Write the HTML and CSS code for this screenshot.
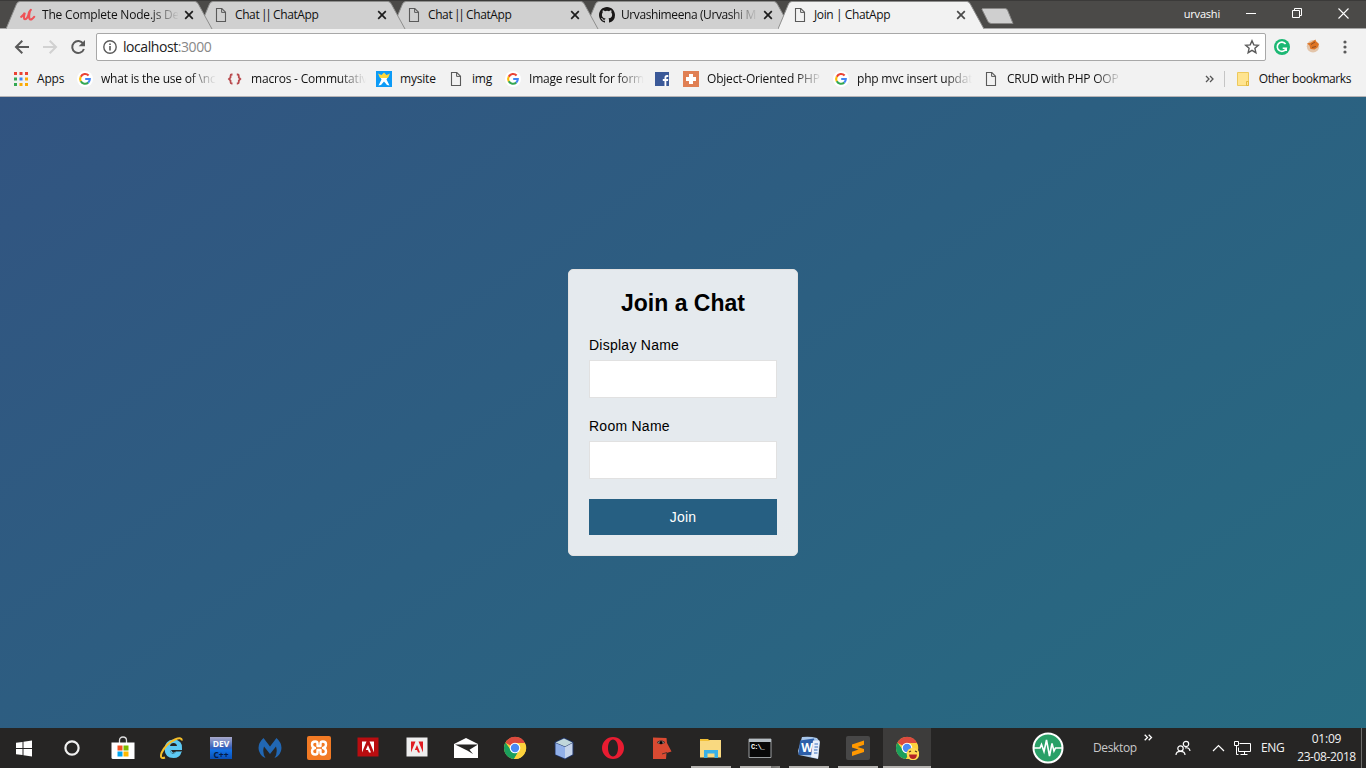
FILE: index.html
```html
<!DOCTYPE html>
<html lang="en">
<head>
<meta charset="utf-8">
<title>Join | ChatApp</title>
<link rel="stylesheet" href="styles.css">
</head>
<body>
<svg class="defs" width="0" height="0">
  <symbol id="doc" viewBox="0 0 16 16"><path d="M3.5 1.5h5.3l3.7 3.7v9.3h-9z" fill="none" stroke="#5a5a5a" stroke-width="1.1"/><path d="M8.6 1.7v3.7h3.8" fill="none" stroke="#5a5a5a"/></symbol>
  <symbol id="google" viewBox="0 0 16 16"><circle cx="8" cy="8" r="8" fill="#fff"/><g fill="none" stroke-width="2.1"><path d="M11.6 4.5A4.8 4.8 0 0 0 3.8 5.7" stroke="#ea4335"/><path d="M3.8 5.6a4.8 4.8 0 0 0 0 4.8" stroke="#fbbc05"/><path d="M3.8 10.3a4.8 4.8 0 0 0 7.4 1.3" stroke="#34a853"/><path d="M8.2 8h4.6a4.8 4.8 0 0 1-1.6 3.6" stroke="#4285f4"/></g></symbol>
  <symbol id="close" viewBox="0 0 10 10"><path d="M1.2 1.2l7.6 7.6M8.8 1.2L1.2 8.8" fill="none" stroke="currentColor" stroke-width="1.7"/></symbol>
  <symbol id="tabshape" viewBox="0 0 207 28"><path d="M0 28L10.5 3Q11.500 0.500 14 .5H189Q191 .5 192.300 3L206 28z" fill="currentColor"/><path d="M0 28L10.500 3Q11.500 .5 14 .5H189Q191 .5 192.300 3L206 28" fill="none" stroke="#8e8e8d"/></symbol>
  <symbol id="chrome" viewBox="0 0 24 24"><circle cx="12" cy="12" r="11" fill="#fdd23c"/><path d="M12 12L2.300 6.800A11 11 0 0 1 22 7z" fill="#db4a3e"/><path d="M2.400 6.600A11 11 0 0 0 11 23l5-8.500-7.500.300z" fill="#1b9f5c"/><path d="M12 7h9.900A11 11 0 0 1 11 23l5.300-8.600z" fill="#fdd23c"/><circle cx="12" cy="12" r="5.300" fill="#fff"/><circle cx="12" cy="12" r="4.200" fill="#4a8af4"/></symbol>
</svg>

<header class="tabstrip">
  <div class="tab t1"><svg class="shape"><use href="#tabshape"/></svg>
    <svg class="favicon" viewBox="0 0 16 16"><path d="M1.200 9.800Q3.500 8.500 4.800 5.800Q3 12.300 5 12.300Q7.800 12 9 5.500M10 3.800Q8.800 8.500 9.300 11Q9.800 13.300 12 12Q13.500 11 14.200 9.800M9.200 5.200L10.800 2.800" fill="none" stroke="#ef5257" stroke-width="2.100" stroke-linecap="round"/></svg>
    <span class="label">The Complete Node.js De</span><svg class="close"><use href="#close"/></svg></div>
  <div class="tab t2"><svg class="shape"><use href="#tabshape"/></svg><svg class="favicon"><use href="#doc"/></svg><span class="label plain">Chat <b class="bars">||</b> ChatApp</span><svg class="close"><use href="#close"/></svg></div>
  <div class="tab t3"><svg class="shape"><use href="#tabshape"/></svg><svg class="favicon"><use href="#doc"/></svg><span class="label plain">Chat <b class="bars">||</b> ChatApp</span><svg class="close"><use href="#close"/></svg></div>
  <div class="tab t4"><svg class="shape"><use href="#tabshape"/></svg>
    <svg class="favicon" viewBox="0 0 16 16"><path fill="#191717" d="M8 0C3.580 0 0 3.580 0 8c0 3.540 2.290 6.530 5.470 7.590.4.070.55-.17.55-.38 0-.19-.01-.82-.01-1.490-2.010.37-2.530-.49-2.690-.94-.09-.23-.48-.94-.82-1.130-.28-.15-.68-.52-.01-.53.63-.01 1.080.58 1.230.82.72 1.210 1.870.87 2.330.66.07-.52.28-.87.51-1.070-1.780-.2-3.640-.89-3.640-3.950 0-.87.31-1.590.82-2.150-.08-.2-.36-1.020.08-2.120 0 0 .67-.21 2.200.82a7.600 7.600 0 0 1 4 0c1.530-1.040 2.200-.82 2.200-.82.44 1.100.16 1.920.08 2.120.51.56.82 1.270.82 2.150 0 3.070-1.870 3.750-3.650 3.950.29.25.54.73.54 1.480 0 1.070-.01 1.930-.01 2.200 0 .21.15.46.55.38A8 8 0 0 0 16 8c0-4.420-3.580-8-8-8z"/></svg>
    <span class="label tight">Urvashimeena (Urvashi M</span><svg class="close"><use href="#close"/></svg></div>
  <div class="tab active"><svg class="shape"><use href="#tabshape"/></svg><svg class="favicon"><use href="#doc"/></svg><span class="label plain">Join | ChatApp</span><svg class="close"><use href="#close"/></svg></div>
  <svg class="newtab" width="34" height="16"><path d="M1.500.5H24Q26 .5 26.700 2.500L32 15.500H10.500Q8 15.500 7 13.500L1 1.500z" fill="#cfcfcf" stroke="#898887"/></svg>
  <div class="window-controls">
    <span class="profile">urvashi</span>
    <svg width="11" height="11"><path d="M0 5.500h10" stroke="#fff"/></svg>
    <svg width="11" height="11"><path d="M.5 2.500h7v7h-7zM2.500 2.500v-2h7v7h-2" fill="none" stroke="#fff"/></svg>
    <svg width="11" height="11"><path d="M.5.5l10 10M10.500.5l-10 10" stroke="#fff" stroke-width="1.100"/></svg>
  </div>
</header>

<div class="toolbar">
  <svg class="nav" viewBox="0 0 16 16"><path d="M15 8H2.500M8.300 1.800L2 8l6.300 6.200" fill="none" stroke="#5a5a5a" stroke-width="2"/></svg>
  <svg class="nav" viewBox="0 0 16 16"><path d="M1 8h12.500M7.700 1.800L14 8l-6.300 6.200" fill="none" stroke="#d1d1d1" stroke-width="2"/></svg>
  <svg class="nav" viewBox="0 0 16 16"><path d="M13.200 4.600A6 6 0 1 0 13.900 10" fill="none" stroke="#5a5a5a" stroke-width="2"/><path d="M15 1v6.300H8.700z" fill="#5a5a5a"/></svg>
  <div class="omnibox">
    <svg class="info" viewBox="0 0 14 14"><circle cx="7" cy="7" r="6.200" fill="none" stroke="#5a5a5a" stroke-width="1.400"/><path d="M7 6v4.500M7 3.400v1.500" stroke="#5a5a5a" stroke-width="1.600"/></svg>
    <span class="url">localhost<i>:3000</i></span>
    <svg class="star" viewBox="0 0 16 16"><path d="M8 1.800l1.800 4.100 4.500.4-3.400 3 1 4.400L8 11.400l-3.900 2.300 1-4.400-3.400-3 4.500-.4z" fill="none" stroke="#5a5a5a" stroke-width="1.400"/></svg>
  </div>
  <svg class="ext" viewBox="0 0 16 16"><circle cx="8" cy="8" r="8" fill="#1cb874"/><path d="M11.600 5A4.600 4.600 0 1 0 12.200 9.300H8.700M12.200 9v3" fill="none" stroke="#fff" stroke-width="1.600"/></svg>
  <svg class="ext fox" viewBox="0 0 16 16"><circle cx="8" cy="8.300" r="6.200" fill="#e3c5aa"/><path d="M2 5.500L6 4.500l4.500-3 .5 2L14 6l-1.500 3.500-3 2L5.500 11 4.500 7.500z" fill="#de7424"/><path d="M6 6.500l4-2.500M7 9.500l4-1" stroke="#8f4e24"/></svg>
  <svg class="menu" width="4" height="14"><g fill="#5a5a5a"><circle cx="2" cy="2" r="1.600"/><circle cx="2" cy="7" r="1.600"/><circle cx="2" cy="12" r="1.600"/></g></svg>
</div>

<nav class="bookmarks">
  <a class="bm w64"><svg viewBox="0 0 16 16"><g fill="#ea4335"><path d="M1 1h3v3H1zM6.500 1h3v3h-3zM12 1h3v3h-3z"/></g><path d="M1 6.500h3v3H1z" fill="#34a853"/><path d="M6.500 6.500h3v3h-3z" fill="#4285f4"/><path d="M12 6.500h3v3h-3z" fill="#fbab05"/><path d="M1 12h3v3H1z" fill="#34a853"/><path d="M6.500 12h3v3h-3zM12 12h3v3h-3z" fill="#fbab05"/></svg><span>Apps</span></a>
  <a class="bm w150 near"><svg><use href="#google"/></svg><span class="fade">what is the use of \nc</span></a>
  <a class="bm w149 near"><svg viewBox="0 0 16 16"><path d="M5.500 3.500H4.700Q3.500 3.500 3.500 5v1.500L2 8l1.500 1.500V11q0 1.500 1.200 1.500h.8M9.800 3.500h.8q1.200 0 1.200 1.500v1.500L13.300 8l-1.500 1.500V11q0 1.500-1.200 1.500h-.8" fill="none" stroke="#b94a4e" stroke-width="1.800"/></svg><span class="fade">macros - Commutativ</span></a>
  <a class="bm w71"><svg viewBox="0 0 16 16"><path d="M0 0h16v16H0z" fill="#0c9bf7"/><path d="M2.500 14.500L5.500 8.500 3 4h10l-2.500 4.500 3 6L11 14l-3-3.500L5 14z" fill="#fff"/><path d="M2 2.500L5.500 4 8 1.500 10.500 4 14 2.500 12 7H4z" fill="#ffd83b"/></svg><span>mysite</span></a>
  <a class="bm w57"><svg><use href="#doc"/></svg><span>img</span></a>
  <a class="bm w150"><svg><use href="#google"/></svg><span class="fade">Image result for form</span></a>
  <a class="bm w28"><svg viewBox="0 0 16 16"><path d="M0 1h14v14H0z" fill="#3b5998"/><path d="M9.500 15V10H7.800V8h1.700V6.500Q9.500 4 12 4h1.300v2H12q-.7 0-.7.8V8h2l-.3 2h-1.700v5z" fill="#fff"/></svg></a>
  <a class="bm w150"><svg viewBox="0 0 16 16"><path d="M0 0h16v16H0z" fill="#e07f53"/><path d="M6 3h4v3h3v4h-3v3H6v-3H3V6h3z" fill="#fff"/></svg><span class="fade">Object-Oriented PHP</span></a>
  <a class="bm w150"><svg><use href="#google"/></svg><span class="fade">php mvc insert updat</span></a>
  <a class="bm w151"><svg><use href="#doc"/></svg><span class="fade">CRUD with PHP OOP</span></a>
  <div class="bm-right">
    <svg width="9" height="8"><path d="M1 1l3 3-3 3M5 1l3 3-3 3" fill="none" stroke="#555" stroke-width="1.300"/></svg>
    <span class="divider"></span>
    <svg class="folder" width="13" height="15"><path d="M.5.5h11v13H.5z" fill="#ffe48f" stroke="#edc95c"/><path d="M9.500 9.500h2v4h-2z" fill="#ffe48f" stroke="#e3b93f"/></svg>
    <span class="other">Other bookmarks</span>
  </div>
</nav>

<main class="page">
  <form class="card">
    <h3>Join a Chat</h3>
    <label for="name">Display Name</label>
    <input id="name" type="text">
    <label for="room">Room Name</label>
    <input id="room" type="text">
    <button type="button">Join</button>
  </form>
</main>

<footer class="taskbar">
  <div class="task start"><svg width="16" height="17"><path d="M0 2.800L6.500 1.900V8H0zM7.500 1.700L16 .5V8H7.500zM0 9h6.500v6.100L0 14.200zM7.500 9H16v7.500l-8.500-1.200z" fill="#fff"/></svg></div>
  <div class="task cortana"><svg width="16" height="16"><circle cx="8" cy="8" r="6.600" fill="none" stroke="#f0f0f0" stroke-width="2.200"/></svg></div>
  <div class="task store"><svg viewBox="0 0 24 24"><path d="M8.500 7V4.500Q8.500 1 12 1t3.500 3.500V7" fill="none" stroke="#ddd" stroke-width="1.300"/><path d="M.5 6.500h23V23H2Q.5 23 .5 21.500z" fill="#fff"/><path d="M6.500 9.500h5v5h-5z" fill="#f25022"/><path d="M12.500 9.500h5v5h-5z" fill="#7fba00"/><path d="M6.500 15.500h5v5h-5z" fill="#00a4ef"/><path d="M12.500 15.500h5v5h-5z" fill="#ffb900"/></svg></div>
  <div class="task"><svg viewBox="0 0 24 24"><path d="M6 13h16Q23 4 13.500 3.500 5 4 4.500 13 5 22 13.500 22q6.500 0 8-6h-5.500Q14 18.500 12 17.500 9.800 16.500 10 13" fill="#5ecaf4"/><path d="M10 10q.5-3 3.500-3t3.500 3z" fill="#262524"/><path d="M10 13q0 4 3 4.500 2 0 3-1.500h6v-3z" fill="#5ecaf4"/><path d="M11 14h12v1.500h-7q-2 1.800-3.500.8z" fill="#262524"/><path d="M22 4.500Q21.500.500 15 3.500 5.500 8 1.500 17-.5 23.500 5 21.500" fill="none" stroke="#f5bf2a" stroke-width="2"/></svg></div>
  <div class="task"><svg viewBox="0 0 24 24"><defs><linearGradient id="dev" x2="0" y2="1"><stop stop-color="#a9a9cb"/><stop offset=".5" stop-color="#365fba"/><stop offset=".6" stop-color="#1272e6"/><stop offset="1" stop-color="#0a4fb5"/></linearGradient></defs><path d="M1 1h22v22H1z" fill="url(#dev)"/><text x="12" y="10.500" class="dev">DEV</text><text x="12" y="22" class="cpp">C++</text></svg></div>
  <div class="task"><svg viewBox="0 0 24 24"><path d="M5.500 2L12 10.500 18.500 2Q25 8 23 15q-2 5.500-6.500 7Q20 17 18 10.500L12 18 6 10.500Q4 17 7.500 22 3 20.500 1 15-1 8 5.500 2z" fill="#2167b4"/></svg></div>
  <div class="task"><svg viewBox="0 0 24 24"><rect width="24" height="24" rx="2" fill="#f27a24"/><path d="M10.500 10V7.500Q10.500 5.500 8.200 5.500 5 5.500 5 8.500q0 3 3 3.500-3 .5-3 3.500t3.200 3q2.300 0 2.300-2V14h3v2.500q0 2 2.300 2 3.200 0 3.200-3t-3-3.500q3-.5 3-3.500t-3.200-3q-2.300 0-2.300 2V10z" fill="none" stroke="#fff" stroke-width="2.400" stroke-linejoin="round"/></svg></div>
  <div class="task"><svg viewBox="0 0 24 24"><path d="M1.500 1.500h21v19h-21z" fill="#b90d10"/><path d="M6 5.500h4.500L6 16.500zM13.500 5.500H18v11zM12 9l3 7.500h-2L12 14h-2.200z" fill="#fff"/></svg></div>
  <div class="task"><svg viewBox="0 0 24 24"><path d="M1.500 1.500h21v19h-21z" fill="#eee"/><path d="M6 5.500h4.500L6 16.500zM13.500 5.500H18v11zM12 9l3 7.500h-2L12 14h-2.200z" fill="#e01b21"/></svg></div>
  <div class="task"><svg viewBox="0 0 24 24"><path d="M0 8l12-6 12 6v14H0z" fill="#fff"/><path d="M1 8.500h23l-8.500 5.200L19 18l-5.800-3.500z" fill="#262524"/></svg></div>
  <div class="task"><svg><use href="#chrome"/></svg></div>
  <div class="task"><svg viewBox="0 0 24 24"><path d="M2.500 6L12 1.500 21.500 6v13L13 23.500 3 19z" fill="#213669"/><path d="M3.500 6.500L12 2.500l8.500 4L13 10.500z" fill="#c1d7db"/><path d="M3.500 7L13 11v11.500L3.500 18.500z" fill="#91b0e9"/><path d="M13 11l7.500-4v11.500L13 22.500z" fill="#c5d4eb"/></svg></div>
  <div class="task"><svg viewBox="0 0 24 24"><path fill-rule="evenodd" d="M12 1a11 11 0 1 0 0 22 11 11 0 1 0 0-22zM12 3.500c3 0 5 4 5 8.500s-2 8.500-5 8.500-5-4-5-8.500 2-8.500 5-8.500z" fill="#e81c31"/></svg></div>
  <div class="task"><svg viewBox="0 0 24 24"><path d="M3 1.500L16.500 2l.5 5 4.500 8.500-5 1.500-.5 6H3z" fill="#d94a32"/><path d="M12 18l5-1.500" stroke="#53322c"/><path d="M7 6.500q4-3.500 8 0-4 3-8 0z" fill="#9cada9" stroke="#53322c"/><circle cx="11" cy="6.500" r="1.500"/></svg></div>
  <div class="task open"><svg viewBox="0 0 24 24"><path d="M1 4h21v17.500H1z" fill="#f9d980"/><path d="M1 3h8l2 2H1z" fill="#f2c037"/><path d="M5 14h14v8h-3.500v-4.500h-7V22H5z" fill="#38b0e6"/></svg></div>
  <div class="task open multi"><svg viewBox="0 0 24 24"><path d="M1 3h22v18.500H1z" fill="#080808" stroke="#9b9fa1"/><path d="M1 3h22v3H1z" fill="#b6bec4"/><text x="3" y="12.500" class="cmd">C:\_</text></svg></div>
  <div class="task open"><svg viewBox="0 0 24 24"><path d="M5 1q8-1 15 1l3 4-2 17L2 19 1 15z" fill="#a9c7ea"/><path d="M3 4.500l14-2 2 16.500L1.500 19z" fill="#2d5fa9"/><path d="M16 4.500h6.500L21 22.500l-7-1.500z" fill="#e8effa"/><path d="M17.500 8H21M17.500 11H21M17 14h3.500M17 17h3.500" stroke="#376dba"/><text x="10" y="16" class="word">W</text></svg></div>
  <div class="task open"><svg viewBox="0 0 24 24"><rect width="24" height="24" rx="2" fill="#474747"/><path d="M6 8.500L18 4.500v4.300l-6.500 2.100L18 13v3L6 20v-4.300l6.500-2.100L6 11.500z" fill="#ff9800"/></svg></div>
  <div class="task open current"><svg viewBox="0 0 24 24"><use href="#chrome" width="24" height="24"/><circle cx="18" cy="18" r="6.300" fill="#ffd952"/><path d="M14 18.500h8q-.5 4.500-4 4.500t-4-4.500z" fill="#b32126"/><path d="M14 16l2-1M20 15l2 1" stroke="#503719" stroke-width="1.200"/></svg></div>

  <div class="tray">
    <svg class="pulse" viewBox="0 0 32 32"><circle cx="16" cy="16" r="14.500" fill="#29a067" stroke="#fff" stroke-width="2"/><path d="M1 16h7l1.500-3.500 2.500 7L14.500 8l3 16L20 11.500l2 7.500 1.500-3H31" fill="none" stroke="#fff" stroke-width="1.600"/></svg>
    <span class="desk">Desktop</span>
    <svg class="chev" width="9" height="7"><path d="M.7.7l2.800 2.800L.7 6.300M4.700.7l2.800 2.800-2.800 2.800" fill="none" stroke="#fff" stroke-width="1.300"/></svg>
    <svg class="people" width="16" height="16"><g fill="none" stroke="#fff" stroke-width="1.200"><circle cx="11" cy="4" r="2.700"/><circle cx="5.500" cy="8.500" r="2.700"/><path d="M1 15q0-3.700 4.500-3.700T10 15M10 8q4.500-1.200 5 3"/></g></svg>
    <svg class="up" width="13" height="8"><path d="M1 7l5.500-5.500L12 7" fill="none" stroke="#fff" stroke-width="1.200"/></svg>
    <svg class="net" width="17" height="15"><path d="M5.500 2.500h11v8h-12v-4M10.500 10.500v3M6.500 13.500h7M.5.500h4v4h-4zM2.500 4.500v9h2" fill="none" stroke="#fff"/></svg>
    <span class="lang">ENG</span>
    <div class="clock"><span>01:09</span><span class="date">23-08-2018</span></div>
    <span class="peek"></span>
  </div>
</footer>
</body>
</html>
```
FILE: styles.css
```css
* { box-sizing: border-box; }
body {
  margin: 0;
  width: 1366px;
  height: 768px;
  overflow: hidden;
  display: flex;
  flex-direction: column;
  font: 12px "Open Sans", "Noto Sans", sans-serif;
  letter-spacing: -0.2px;
  color: #111;
}
svg { display: block; flex: none; }
.defs { position: absolute; }

/* Tab strip */
.tabstrip {
  height: 29px;
  flex: none;
  display: flex;
  padding-left: 6px;
  background: #4b4a48;
  border-top: 1px solid #3b3a39;
  border-bottom: 1px solid #a5a5a5;
}
.tab {
  position: relative;
  width: 193px;
  height: 28px;
  flex: none;
  display: flex;
  align-items: center;
  padding: 0 0 0 14px;
  color: #d0d0d0;
}
.t1 { z-index: 4; }
.t2 { z-index: 3; }
.t3 { z-index: 2; }
.t4 { z-index: 1; }
.tab .shape { position: absolute; left: 0; top: 0; width: 207px; height: 28px; }
.tab.active { color: #f2f2f2; z-index: 5; }
.favicon { position: relative; width: 16px; height: 16px; margin-right: 6px; }
.tab .label {
  position: relative;
  width: 136px;
  margin-top: -2px;
  white-space: nowrap;
  color: #111;
  -webkit-mask-image: linear-gradient(90deg, #000 108px, transparent 137px);
}
.tab .label.plain { -webkit-mask-image: none; letter-spacing: -0.4px; }
.bars { font-weight: normal; letter-spacing: -2.4px; margin: 0 1px 0 -1px; }
.tab .label.tight { letter-spacing: -0.4px; }
.close { position: relative; width: 10px; height: 10px; margin-left: 6px; color: #1d1d1d; }
.active .close { color: #4a4a4a; }
.newtab { margin: 7px 0 0 10px; }
.window-controls {
  margin-left: auto;
  display: flex;
  align-items: center;
  padding: 0 17px 3px 0;
  gap: 35px;
  color: #fff;
}
.profile { font-size: 11px; margin-right: -9px; }

/* Address bar */
.toolbar {
  height: 34px;
  flex: none;
  display: flex;
  align-items: center;
  padding: 2px 0 0 14px;
  background: #f2f2f2;
}
.nav { width: 16px; height: 16px; margin-right: 12px; }
.omnibox {
  width: 1170px;
  height: 28px;
  margin-left: -2px;
  display: flex;
  align-items: center;
  padding: 0 5px 0 6px;
  background: #fff;
  border: 1px solid #a8a8a8;
  border-radius: 2px;
}
.info { width: 14px; height: 14px; margin-right: 6px; }
.url { font-size: 14px; color: #222; letter-spacing: -0.43px; margin-top: -2px; }
.url i { font-style: normal; color: #888; }
.star { width: 16px; height: 16px; margin-left: auto; }
.ext { width: 16px; height: 16px; margin-left: 8px; }
.fox { margin-left: 15px; margin-top: -3px; }
.menu { margin-left: 22px; }

/* Bookmarks */
.bookmarks {
  height: 34px;
  flex: none;
  display: flex;
  align-items: center;
  padding: 0 15px 1px 13px;
  background: #f2f2f2;
  border-bottom: 1px solid #b6b4b6;
}
.bm { display: flex; align-items: center; flex: none; white-space: nowrap; }
.bm svg { width: 16px; height: 16px; margin-right: 8px; }
.bm span, .other { margin-top: -2px; }
.bm.near svg { margin-right: 8px; }
.bm .fade {
  width: 115px;
  overflow: hidden;
  -webkit-mask-image: linear-gradient(90deg, #000 88px, transparent 115px);
}
.w28 { width: 28px; }
.w57 { width: 57px; }
.w64 { width: 64px; }
.w71 { width: 72px; }
.w149 { width: 149px; }
.w150 { width: 150px; }
.w151 { width: 151px; }
.bm-right { margin-left: auto; display: flex; align-items: center; white-space: nowrap; }
.other { letter-spacing: -0.42px; }
.divider { width: 1px; height: 16px; margin: 0 12px 0 10px; background: #c5c5c5; }
.folder { margin-right: 9px; }

/* Page */
.page {
  flex: 1;
  display: flex;
  align-items: center;
  justify-content: center;
  background: linear-gradient(146deg, #325481 0%, #2c5f81 48%, #276b81 100%);
  font-family: "Liberation Sans", Arial, sans-serif;
  font-size: 14px;
  letter-spacing: 0;
}
.card {
  width: 230px;
  height: 287px;
  display: flex;
  flex-direction: column;
  padding: 20px;
  background: rgba(250, 250, 250, 0.9);
  border: 1px solid #e1e1e1;
  border-radius: 5px;
  color: #000;
}
.card h3 { margin: 0 0 20px; font-size: 23px; line-height: 27px; text-align: center; }
.card label { line-height: 16px; margin-bottom: 7px; letter-spacing: 0.25px; }
.card input {
  width: 100%;
  height: 38px;
  margin: 0 0 20px;
  background: #fff;
  border: 1px solid #e1e1e1;
}
.card button {
  height: 36px;
  border: 0;
  padding: 0;
  background: #265f82;
  color: #fff;
  font: 14px "Liberation Sans", Arial, sans-serif;
  letter-spacing: 0.2px;
}

/* Taskbar */
.taskbar { height: 40px; flex: none; display: flex; background: #262524; color: #f2f2f2; }
.task { position: relative; width: 49px; flex: none; display: flex; align-items: center; justify-content: center; }
.task svg { width: 24px; height: 24px; }
.task.start, .task.cortana { width: 48px; }
.task.start svg { width: 16px; height: 17px; }
.task.cortana svg { width: 16px; height: 16px; }
.task.store { margin-left: 2px; }
.task.open::after { content: ""; position: absolute; left: 5px; bottom: 0; width: 40px; height: 2px; background: #b5b3b0; }
.task.multi::after { background: linear-gradient(90deg, #b5b3b0 31px, #6f6e6c 31px, #888784 40px); }
.task.current { background: linear-gradient(#3d3c3b, #3d3c3b) 1px 0 / 48px 40px no-repeat; }
.task.current::after { left: 1px; width: 48px; }
.dev, .cpp, .word { font: bold 8.5px "Open Sans", sans-serif; text-anchor: middle; fill: #fff; letter-spacing: 0; }
.cpp { fill: #031c48; }
.word { font-size: 12px; }
.cmd { font: bold 7px "Liberation Mono", monospace; fill: #fff; letter-spacing: -1px; }
.tray { margin-left: auto; display: flex; align-items: center; }
.pulse { width: 32px; height: 32px; margin-right: 29px; }
.desk { color: #c9c9c9; width: 43px; letter-spacing: -0.35px; margin-top: -1px; }
.chev { margin: -21px 22px 0 8px; }
.people { margin-right: 21px; }
.up { margin-right: 9px; }
.net { margin-right: 10px; }
.lang { width: 23px; letter-spacing: -0.4px; margin-top: -1px; }
.clock { width: 59px; margin: 0 5px 0 13px; display: flex; flex-direction: column; align-items: center; line-height: 18px; white-space: nowrap; }
.date { letter-spacing: -0.4px; }
.peek { width: 1px; height: 40px; background: #6d6d6b; margin-right: 4px; }
```
